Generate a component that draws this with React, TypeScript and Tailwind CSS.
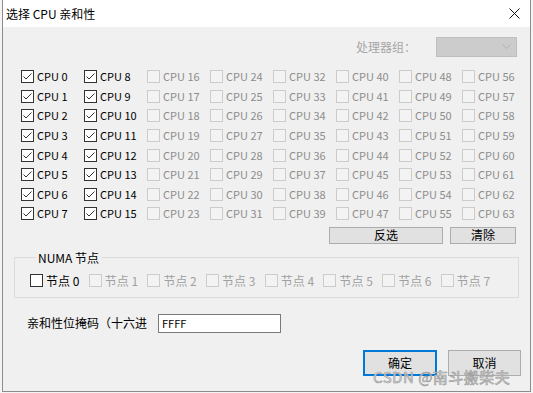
import React from "react";

const rows = [0, 1, 2, 3, 4, 5, 6, 7];
const cpuCols = [0, 1, 2, 3, 4, 5, 6, 7];

function Box({ checked, disabled }: { checked?: boolean; disabled?: boolean }) {
  return (
    <span
      className={`flex h-[13px] w-[13px] shrink-0 items-center justify-center border ${
        disabled ? "border-[#cccccc] bg-[#f3f3f3]" : "border-[#333333] bg-white"
      }`}
    >
      {checked && (
        <svg width="11" height="11" viewBox="0 0 11 11">
          <path d="M1.5 5.5 L4 8 L9.5 2.5" fill="none" stroke="#333" strokeWidth="1" />
        </svg>
      )}
    </span>
  );
}

export default function App() {
  return (
    <div className="h-[393px] w-[533px] overflow-hidden bg-[#f4f4f4] font-['Noto_Sans_CJK_SC',sans-serif] text-[12px] text-black">
      <div className="relative ml-[2px] flex h-[392px] w-[529px] flex-col border-x border-b border-[#8c8c8c]">
        {/* title bar */}
        <div className="flex h-[27px] items-center justify-between bg-white pl-[3px] pr-[10px]">
          <span className="text-[12px] leading-none">选择 CPU 亲和性</span>
          <svg width="11" height="11" viewBox="0 0 11 11">
            <path d="M0.5 0.5 L10.5 10.5 M10.5 0.5 L0.5 10.5" stroke="#111" strokeWidth="1" />
          </svg>
        </div>

        <div className="flex flex-1 flex-col bg-[#f0f0f0]">
          {/* processor group */}
          <div className="mt-[10px] flex items-center justify-end gap-[20px] pr-[13px]">
            <span className="text-[#a6a6a6]">处理器组：</span>
            <div className="flex h-[20px] w-[81px] items-center justify-end border border-[#bfbfbf] bg-[#cccccc] pr-[5px]">
              <svg width="9" height="6" viewBox="0 0 9 6">
                <path d="M0.5 0.5 L4.5 4.5 L8.5 0.5" fill="none" stroke="#b0b0b0" strokeWidth="1" />
              </svg>
            </div>
          </div>

          {/* cpu grid */}
          <div className="mt-[10px] grid grid-flow-col grid-cols-[repeat(8,63px)] grid-rows-[repeat(8,19.6px)] pl-[18px]">
            {cpuCols.map((c) =>
              rows.map((r) => {
                const n = c * 8 + r;
                const on = n < 16;
                return (
                  <div key={n} className="flex items-center gap-[3px]">
                    <Box checked={on} disabled={!on} />
                    <span className={`text-[11px] leading-none ${on ? "text-black" : "text-[#8d8d8d]"}`}>CPU {n}</span>
                  </div>
                );
              })
            )}
          </div>

          <div className="mt-[3px] flex justify-end gap-[7px] pr-[14px]">
            <button className="h-[17px] w-[114px] border border-[#adadad] bg-[#e1e1e1] text-[12px] leading-none">反选</button>
            <button className="h-[17px] w-[66px] border border-[#adadad] bg-[#e1e1e1] text-[12px] leading-none">清除</button>
          </div>

          {/* numa */}
          <fieldset className="mx-[11px] mt-[6px] border border-[#dcdcdc] pb-[6px] pl-[15px] pt-[5px]">
            <legend className="ml-[6px] px-[2px] text-[12px] leading-[16px]">NUMA 节点</legend>
            <div className="grid grid-cols-[repeat(8,58.7px)]">
              {rows.map((i) => (
                <div key={i} className="flex h-[20px] items-center gap-[3px]">
                  <Box disabled={i !== 0} />
                  <span className={i === 0 ? "text-black" : "text-[#a0a0a0]"}>节点 {i}</span>
                </div>
              ))}
            </div>
          </fieldset>

          {/* mask */}
          <div className="mt-[16px] flex items-center pl-[24px]">
            <span className="w-[131px] whitespace-nowrap">亲和性位掩码（十六进</span>
            <div className="flex h-[19px] w-[123px] items-center border border-[#7a7a7a] bg-white pl-[3px] text-[11px]">FFFF</div>
          </div>

          <div className="mt-[17px] flex justify-end gap-[11px] pr-[9px]">
            <button className="h-[26px] w-[74px] border-2 border-[#0078d7] bg-[#e1e1e1] text-[12px]">确定</button>
            <button className="h-[26px] w-[73px] border border-[#adadad] bg-[#e1e1e1] text-[12px]">取消</button>
          </div>
        </div>

        <span className="pointer-events-none absolute left-[370px] top-[366px] text-[15px] tracking-[0.5px] text-[#d8d8d8] [-webkit-text-stroke:0.6px_#9a9a9a]">
          CSDN @南斗搬柴夫
        </span>
      </div>
    </div>
  );
}
